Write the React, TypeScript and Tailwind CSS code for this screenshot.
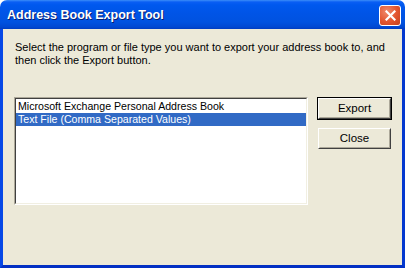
const font = "font-['Tahoma','DejaVu_Sans',sans-serif]";

function CloseGlyph() {
  return (
    <svg width="11" height="11" viewBox="0 0 11 11">
      <path d="M1.5 1.5 L9.5 9.5 M9.5 1.5 L1.5 9.5" stroke="#fff" strokeWidth="2.2" strokeLinecap="square" />
    </svg>
  );
}

function Button({ label, isDefault }: { label: string; isDefault?: boolean }) {
  return (
    <div className={isDefault ? "border border-black" : "border border-transparent"}>
      <div className="border border-t-white border-l-white border-r-[#404040] border-b-[#404040]">
        <div className="h-[19px] w-[71px] flex items-center justify-center border border-t-[#ECE9D8] border-l-[#ECE9D8] border-r-[#ACA899] border-b-[#ACA899] bg-[#ECE9D8] text-[11.5px] text-black font-['Liberation_Sans',sans-serif]">
          {label}
        </div>
      </div>
    </div>
  );
}

export default function App() {
  return (
    <div className={`w-[405px] h-[268px] bg-white flex flex-col ${font}`}>
      <div className="h-[29px] rounded-t-[7px] flex items-center justify-between pl-[7px] pr-[4px] bg-[linear-gradient(to_bottom,#3C8DF8_0px,#0A5EF4_2px,#0058EE_5px,#0054E6_14px,#0052E0_22px,#0048D2_27px,#003CC0_29px)]">
        <span className="text-white text-[12.5px] font-bold font-['Liberation_Sans',sans-serif] [text-shadow:1px_1px_0_#0A1E6E] mt-[1px]">
          Address Book Export Tool
        </span>
        <div className="w-[22px] h-[21px] mt-[2px] rounded-[3px] border border-white bg-[radial-gradient(circle_at_35%_30%,#F08A6C,#E2542E_55%,#C3411E)] flex items-center justify-center">
          <CloseGlyph />
        </div>
      </div>
      <div className="flex-1 flex flex-col border-l-[3px] border-r-[3px] border-b-[3px] border-l-[#0748E6] border-r-[#0338CF] border-b-[#0230C3] bg-[#ECE9D8]">
        <p className="pl-[12px] pt-[12px] text-[11px] leading-[13px] text-black font-['Liberation_Sans',sans-serif] whitespace-nowrap">
          Select the program or file type you want to export your address book to, and
          <br />
          then click the Export button.
        </p>
        <div className="flex items-start pl-[11px] pt-[30px] gap-[9px]">
          <div className="border border-t-[#ACA899] border-l-[#ACA899] border-r-white border-b-white">
            <div className="w-[292px] h-[106px] border border-t-[#404040] border-l-[#404040] border-r-[#F1EFE2] border-b-[#F1EFE2] bg-white pt-[1px] text-[10.6px] font-['Liberation_Sans',sans-serif]">
              <div className="h-[13px] leading-[13px] pl-[2px] text-black">Microsoft Exchange Personal Address Book</div>
              <div className="h-[13px] leading-[13px] pl-[2px] text-white bg-[#316AC5]">Text File (Comma Separated Values)</div>
            </div>
          </div>
          <div className="flex flex-col gap-[7px]">
            <Button label="Export" isDefault />
            <Button label="Close" />
          </div>
        </div>
      </div>
    </div>
  );
}
